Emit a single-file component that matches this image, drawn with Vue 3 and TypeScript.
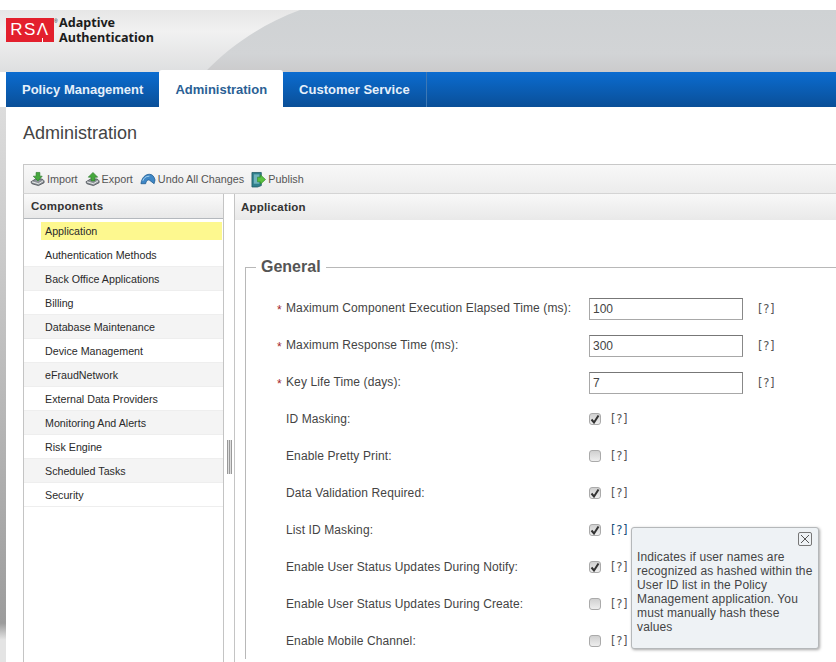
<script setup lang="ts">
import { ref } from "vue";

interface FormRow {
  label: string
  required?: boolean
  value?: string
  checked?: boolean
  active?: boolean
}

const tabs = ["Policy Management", "Administration", "Customer Service"]
const activeTab = ref("Administration")

const components = [
  "Application",
  "Authentication Methods",
  "Back Office Applications",
  "Billing",
  "Database Maintenance",
  "Device Management",
  "eFraudNetwork",
  "External Data Providers",
  "Monitoring And Alerts",
  "Risk Engine",
  "Scheduled Tasks",
  "Security"
]
const selected = ref("Application")

const rows: FormRow[] = [
  { label: "Maximum Component Execution Elapsed Time (ms):", required: true, value: "100" },
  { label: "Maximum Response Time (ms):", required: true, value: "300" },
  { label: "Key Life Time (days):", required: true, value: "7" },
  { label: "ID Masking:", checked: true },
  { label: "Enable Pretty Print:", checked: false },
  { label: "Data Validation Required:", checked: true },
  { label: "List ID Masking:", checked: true, active: true },
  { label: "Enable User Status Updates During Notify:", checked: true },
  { label: "Enable User Status Updates During Create:", checked: false },
  { label: "Enable Mobile Channel:", checked: false }
]
</script>

<template>
  <div class="page">
    <header class="banner">
      <svg class="swoosh" width="836" height="62" viewBox="0 0 836 62">
        <defs>
          <linearGradient id="swooshFill" x1="0" x2="0" y1="0" y2="1">
            <stop offset="0" stop-color="#cfd2d4" />
            <stop offset="0.7" stop-color="#d2d4d6" />
            <stop offset="1" stop-color="#cbcbcc" />
          </linearGradient>
        </defs>
        <path d="M205 62C230 36 262 14 300 0L836 0L836 62Z" fill="url(#swooshFill)" />
      </svg>
      <div class="logo">
        <span class="logo-mark">RSΛ</span>
        <span class="logo-reg">®</span>
        <span class="logo-name">Adaptive<br />Authentication</span>
      </div>
    </header>

    <nav class="tabs">
      <a
        v-for="tab in tabs"
        :key="tab"
        class="tab"
        :class="{ active: tab === activeTab }"
        @click="activeTab = tab"
      >{{ tab }}</a>
    </nav>

    <div class="body">
      <main class="main">
        <h1 class="title">Administration</h1>

        <div class="toolbar">
          <span class="tool">
            <svg width="15" height="16" viewBox="0 0 16 16">
              <path d="M1 11l5-3h7l2 2v2l-6 3-7-2z" fill="#8d9399" stroke="#3f4449" stroke-width=".8" />
              <path d="M2 11l7 2 5-3" fill="none" stroke="#eeeeee" />
              <path d="M6.500 1h4v4h2.500L8.500 10 3.500 5h3z" fill="#45a83c" stroke="#2b7a2b" stroke-width=".7" />
            </svg>
            Import
          </span>
          <span class="tool">
            <svg width="15" height="16" viewBox="0 0 16 16">
              <path d="M1 11l5-3h7l2 2v2l-6 3-7-2z" fill="#8d9399" stroke="#3f4449" stroke-width=".8" />
              <path d="M2 11l7 2 5-3" fill="none" stroke="#eeeeee" />
              <path d="M6.500 10V6H3.500L8.500 1l5 5h-3v4z" fill="#45a83c" stroke="#2b7a2b" stroke-width=".7" />
            </svg>
            Export
          </span>
          <span class="tool">
            <svg width="16" height="16" viewBox="0 0 17 16">
              <path d="M1 13C2 6 6 3 10 3c3 0 5 2 6 6l-1 4-4-3C9 8 7 9 6 13z" fill="#3f87c6" stroke="#1d5a8e" stroke-width=".8" />
              <path d="M3 10c1-3 3-5 7-5" fill="none" stroke="#a9d3ee" />
            </svg>
            Undo All Changes
          </span>
          <span class="tool">
            <svg width="15" height="17" viewBox="0 0 16 17">
              <path d="M1 1h10v14l-4 1.500H1z" fill="#2f7f8c" stroke="#1c5560" stroke-width=".8" />
              <path d="M3 3h6v10H3z" fill="#70b3bd" />
              <path d="M7 6h3V3.500L15.500 8.500 10 13.500V11H7z" fill="#5cc23f" stroke="#2f8a2a" stroke-width=".7" />
            </svg>
            Publish
          </span>
        </div>

        <div class="columns">
          <aside class="sidebar">
            <div class="sidebar-head">Components</div>
            <ul class="menu">
              <li
                v-for="item in components"
                :key="item"
                class="menu-row"
                @click="selected = item"
              >
                <span class="menu-item" :class="{ selected: item === selected }">{{ item }}</span>
              </li>
            </ul>
          </aside>

          <div class="splitter">
            <span class="grip"></span>
          </div>

          <section class="panel">
            <div class="panel-head">Application</div>
            <fieldset class="group">
              <legend>General</legend>
              <div class="form">
                <div v-for="row in rows" :key="row.label" class="form-row">
                  <label class="form-label">
                    <span v-if="row.required" class="star">*</span>{{ row.label }}
                  </label>
                  <div class="form-control">
                    <input v-if="row.value" class="text" type="text" :value="row.value" readonly />
                    <span v-else class="check">
                      <svg v-if="row.checked" width="10" height="10" viewBox="0 0 10 10">
                        <path d="M1.500 5.500L4 8.500 8.500 1.500" fill="none" stroke="#333" stroke-width="2" />
                      </svg>
                    </span>
                    <span class="help" :class="{ hot: row.active }">[?]</span>
                  </div>
                </div>
              </div>
            </fieldset>
          </section>
        </div>
      </main>
    </div>

    <div class="tooltip">
      <span class="tip-close">
        <svg width="10" height="10" viewBox="0 0 10 10">
          <path d="M1 1l8 8M9 1l-8 8" stroke="#555" stroke-width="1" fill="none" />
        </svg>
      </span>
      <p>Indicates if user names are recognized as hashed within the User ID list in the Policy Management application. You must manually hash these values</p>
    </div>
  </div>
</template>

<style scoped>
.page {
  position: relative;
  width: 836px;
  height: 662px;
  overflow: hidden;
  padding-top: 10px;
  box-sizing: border-box;
  background: #fff;
  font-family: "Liberation Sans", Arial, sans-serif;
  color: #333;
}
.banner {
  position: relative;
  height: 62px;
  background: linear-gradient(180deg, #e6e6e6 0%, #f1f1f1 35%, #dedfe0 100%);
}
.swoosh {
  position: absolute;
  left: 0;
  top: 0;
}
.logo {
  position: relative;
  display: flex;
  padding: 8px 0 0 6px;
}
.logo-mark {
  position: relative;
  width: 48px;
  height: 24px;
  background: #e3202d;
  color: #fff;
  font-size: 17px;
  line-height: 24px;
  letter-spacing: 1.5px;
  text-align: center;
}
.logo-mark::after {
  content: "";
  position: absolute;
  left: 36px;
  bottom: 0;
  width: 1px;
  height: 4px;
  background: #fff;
}
.logo-reg {
  width: 5px;
  font-size: 5px;
  line-height: 6px;
  color: #222;
}
.logo-name {
  margin: -2px 0 0 0;
  font-family: "Noto Sans", sans-serif;
  font-weight: 700;
  font-size: 12.6px;
  line-height: 14.5px;
  color: #1c1c1c;
}
.tabs {
  position: relative;
  display: flex;
  height: 35px;
  margin-left: 6px;
  background: linear-gradient(180deg, #0b6cd0 0%, #0a4f98 100%);
}
.tab {
  padding: 0 16px;
  font-size: 13px;
  font-weight: bold;
  line-height: 35px;
  color: #e6f0fa;
  border-right: 1px solid #3d78b5;
}
.tab:first-child {
  border-right: 0;
}
.tab.active {
  margin-top: -2px;
  height: 37px;
  background: #fff;
  color: #2a5f95;
  line-height: 39px;
  border-right: 0;
  border-radius: 3px 3px 0 0;
}
.body {
  padding-left: 6px;
  background: linear-gradient(180deg, #dcdcdc 0%, #c8c8c8 30%, #9c9c9c 93%, #e4e4e4 96%);
}
.main {
  padding-left: 17px;
  height: 555px;
  background: #fff;
}
.title {
  margin: 0;
  padding-top: 15px;
  height: 42px;
  font-size: 18px;
  font-weight: normal;
  line-height: 22px;
  color: #444;
}
.toolbar {
  display: flex;
  align-items: center;
  height: 28px;
  padding-left: 6px;
  background: linear-gradient(180deg, #f8f8f8 0%, #ececec 100%);
  border-top: 1px solid #c8c8c8;
  border-left: 1px solid #c8c8c8;
  border-bottom: 1px solid #d4d4d4;
}
.tool {
  display: flex;
  align-items: center;
  gap: 2px;
  margin-right: 7px;
  font-size: 10.8px;
  color: #555;
}
.columns {
  display: flex;
  height: 470px;
}
.sidebar {
  width: 199px;
  flex: none;
  border-left: 1px solid #c4c4c4;
  border-right: 1px solid #c4c4c4;
}
.sidebar-head {
  height: 24px;
  padding-left: 7px;
  font-size: 11.5px;
  font-weight: bold;
  line-height: 24px;
  letter-spacing: 0.2px;
  color: #333;
  background: linear-gradient(180deg, #fafafa 0%, #e8e8e8 100%);
  border-bottom: 1px solid #b4b8bd;
}
.menu {
  list-style: none;
  margin: 0;
  padding: 0;
}
.menu-row {
  height: 23px;
  padding: 0 1px 0 17px;
  display: flex;
  align-items: center;
  border-bottom: 1px solid #eeeeee;
}
.menu-row:nth-child(odd) {
  background: #f4f4f4;
}
.menu-row:first-child {
  height: 24px;
  background: #fff;
  border-bottom: 0;
}
.menu-item {
  flex: 1;
  height: 18px;
  padding-left: 4px;
  font-size: 10.7px;
  line-height: 18px;
  color: #2a2a2a;
}
.menu-item.selected {
  background: #fdf88f;
}
.splitter {
  position: relative;
  width: 10px;
  flex: none;
}
.grip {
  position: absolute;
  left: 3px;
  top: 246px;
  width: 5px;
  height: 34px;
  background: repeating-linear-gradient(90deg, #999 0 1px, #ddd 1px 2px);
}
.panel {
  flex: 1;
  min-width: 0;
  border-left: 1px solid #c4c4c4;
}
.panel-head {
  height: 26px;
  padding-left: 6px;
  font-size: 11.5px;
  font-weight: bold;
  line-height: 26px;
  letter-spacing: 0.2px;
  color: #333;
  background: linear-gradient(180deg, #f8f8f8 0%, #e9e9e9 100%);
}
.group {
  margin: 38px -20px 0 10px;
  padding: 0;
  border: 0;
  border-top: 1px solid #b8b8b8;
  border-left: 1px solid #b8b8b8;
  min-width: 0;
}
.group legend {
  margin-left: 10px;
  padding: 0 5px;
  font-size: 16px;
  font-weight: bold;
  line-height: 18px;
  color: #555;
}
.form {
  padding: 13px 0 0 40px;
}
.form-row {
  display: flex;
  align-items: center;
  height: 37px;
}
.form-label {
  position: relative;
  width: 303px;
  flex: none;
  font-size: 12px;
  letter-spacing: 0.11px;
  color: #444;
}
.star {
  position: absolute;
  left: -9px;
  top: 2px;
  color: #a3262c;
}
.form-control {
  display: flex;
  align-items: center;
}
.text {
  width: 154px;
  height: 22px;
  box-sizing: border-box;
  margin-top: 2px;
  padding: 0 3px;
  font-family: inherit;
  font-size: 12px;
  color: #444;
  background: #fff;
  border: 1px solid #a8a8a8;
  border-top-color: #777;
  border-right-color: #888;
  outline: none;
}
.text + .help {
  margin-left: 15px;
  margin-top: 2px;
}
.check {
  display: flex;
  align-items: center;
  justify-content: center;
  width: 12px;
  height: 12px;
  box-sizing: border-box;
  margin-right: 10px;
  background: linear-gradient(180deg, #d0d0d0, #eeeeee);
  border: 1px solid #aaa;
  border-radius: 3px;
}
.help {
  font-family: "DejaVu Sans", sans-serif;
  font-size: 11.5px;
  letter-spacing: 0.7px;
  color: #555;
}
.help.hot {
  color: #174f7a;
}
.tooltip {
  position: absolute;
  left: 631px;
  top: 527px;
  width: 188px;
  height: 122px;
  box-sizing: border-box;
  padding: 22px 5px 0 5px;
  background: #eef2f5;
  border: 1px solid #b5b8ba;
  border-radius: 3px;
  box-shadow: 1px 1px 3px rgba(0, 0, 0, 0.35);
}
.tooltip p {
  margin: 0;
  font-size: 12px;
  line-height: 14px;
  letter-spacing: 0.13px;
  color: #444;
}
.tip-close {
  position: absolute;
  right: 6px;
  top: 4px;
  display: flex;
  align-items: center;
  justify-content: center;
  width: 14px;
  height: 14px;
  box-sizing: border-box;
  border: 1px solid #777;
  border-radius: 2px;
}
</style>

<style>
html,
body {
  margin: 0;
  background: #fff;
}
</style>
